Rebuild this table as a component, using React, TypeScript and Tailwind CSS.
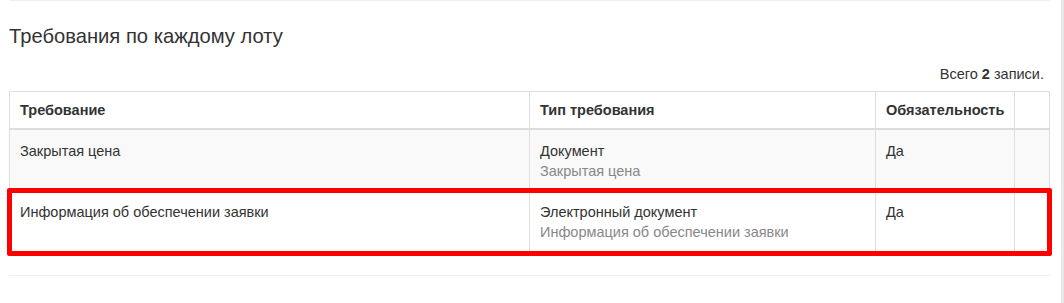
export default function App() {
  const rows = [
    { req: "Закрытая цена", type: "Документ", sub: "Закрытая цена", must: "Да", striped: true },
    { req: "Информация об обеспечении заявки", type: "Электронный документ", sub: "Информация об обеспечении заявки", must: "Да", striped: false },
  ];
  return (
    <div className="relative flex h-[303px] w-[1064px] bg-white text-[14.5px] text-[#333]" style={{ fontFamily: '"Liberation Sans", Arial, sans-serif' }}>
      <div className="w-[1061px] px-[9px]">
        <div className="w-[1041px] border-t border-[#eee]" />
        <h3 className="mt-[24px] text-[20.2px] leading-[22px] font-normal">Требования по каждому лоту</h3>
        <div className="mt-[17px] pr-[8px] text-right leading-[20px]">
          Всего <b>2</b> записи.
        </div>
        <table className="mt-[7px] w-[1041px] border-collapse border border-[#ddd]">
          <thead>
            <tr className="leading-[20px]">
              <th className="w-[520px] border border-b-2 border-[#ddd] px-[10px] py-[8px] text-left font-bold">Требование</th>
              <th className="w-[346px] border border-b-2 border-[#ddd] px-[10px] py-[8px] text-left font-bold">Тип требования</th>
              <th className="w-[139px] border border-b-2 border-[#ddd] px-[10px] py-[8px] text-left font-bold">Обязательность</th>
              <th className="border border-b-2 border-[#ddd] px-[10px] py-[8px]"></th>
            </tr>
          </thead>
          <tbody>
            {rows.map((r, i) => (
              <tr key={i} className={`leading-[20px] align-top ${r.striped ? "bg-[#f9f9f9]" : "bg-white"}`}>
                <td className="border border-[#ddd] px-[10px] pt-[11px] pb-[8px]">{r.req}</td>
                <td className="border border-[#ddd] px-[10px] pt-[11px] pb-[8px]">
                  <div>{r.type}</div>
                  <div className="leading-[21px] text-[#888]">{r.sub}</div>
                </td>
                <td className="border border-[#ddd] px-[10px] pt-[11px] pb-[8px]">{r.must}</td>
                <td className="border border-[#ddd] px-[10px] pt-[11px] pb-[8px]"></td>
              </tr>
            ))}
          </tbody>
        </table>
        <div className="mt-[23px] w-[1041px] border-t border-[#eee]" />
      </div>
      <div className="w-[3px] bg-[#e8e8e8]" />
      <div className="pointer-events-none absolute left-[7px] top-[188px] h-[68px] w-[1045px] rounded-[2px] border-[5px] border-[#ff0000]" />
    </div>
  );
}
